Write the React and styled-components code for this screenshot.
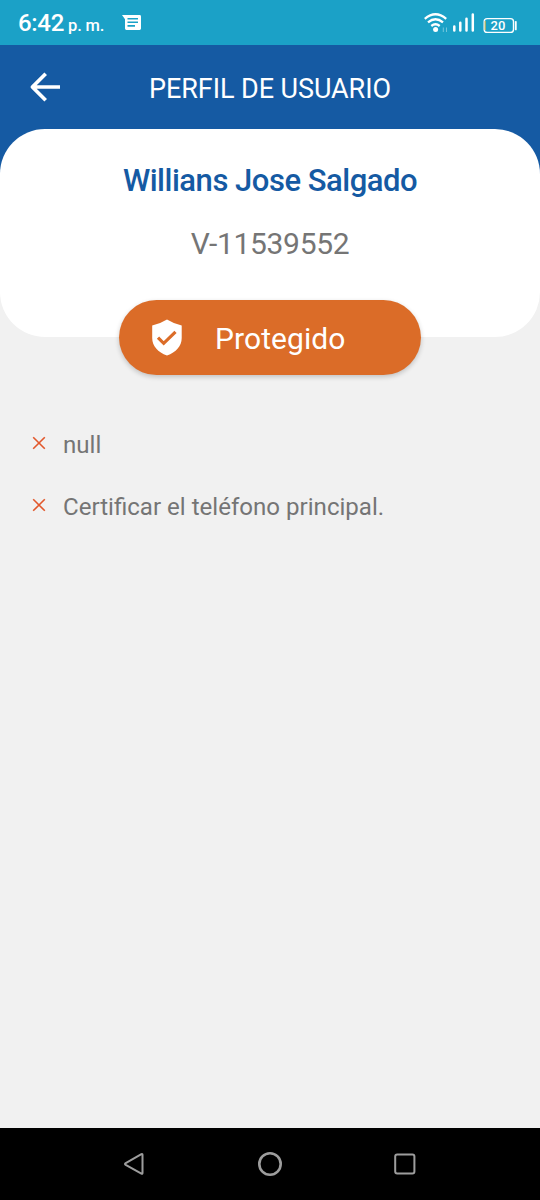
import styled, { createGlobalStyle } from "styled-components";

const GlobalStyle = createGlobalStyle`
  * {
    box-sizing: border-box;
  }
  body {
    margin: 0;
    font-family: Roboto, sans-serif;
    background-color: #f1f1f1;
  }
  svg {
    display: block;
    flex-shrink: 0;
  }
`;

const Screen = styled.div`
  width: 540px;
  height: 1200px;
  display: flex;
  flex-direction: column;
  overflow: hidden;
  white-space: nowrap;
  background-color: #f1f1f1;
`;

const StatusBar = styled.div`
  height: 45px;
  flex-shrink: 0;
  display: flex;
  justify-content: space-between;
  padding: 0 22px 0 18px;
  color: white;
  background-color: #1ba1c7;
`;

const StatusLeft = styled.div`
  display: flex;
  align-items: flex-start;
`;

const Clock = styled.div`
  width: 104px;
  line-height: 47px;
  font-size: 24px;
  font-weight: 500;
  letter-spacing: -0.3px;
`;

const Period = styled.span`
  margin-left: 4px;
  font-size: 16.5px;
  letter-spacing: -0.15px;
`;

const MessageIcon = styled.svg`
  margin-top: 14px;
`;

const StatusIcons = styled.svg`
  margin-top: 10px;
`;

const Header = styled.div`
  flex-shrink: 0;
  background: linear-gradient(#155aa3 0 130px, #f1f1f1 130px);
`;

const AppBar = styled.div`
  height: 84px;
  display: grid;
  grid-template-columns: 60px 1fr 60px;
  align-items: center;
`;

const BackButton = styled.button`
  padding: 0 0 0 29px;
  border: none;
  background: none;
  cursor: pointer;
`;

const Title = styled.h1`
  margin: 3px 0 0;
  text-align: center;
  font-size: 27px;
  line-height: 32px;
  font-weight: 400;
  letter-spacing: -0.08px;
  color: white;
`;

const Card = styled.div`
  height: 208px;
  display: flex;
  flex-direction: column;
  align-items: center;
  padding-top: 34px;
  border-radius: 45px;
  background-color: white;
`;

const Name = styled.div`
  line-height: 36px;
  font-size: 31px;
  font-weight: 500;
  letter-spacing: -0.48px;
  color: #155aa3;
`;

const Document = styled.div`
  margin-top: 27px;
  line-height: 36px;
  font-size: 30px;
  letter-spacing: -0.3px;
  color: #757575;
`;

const StatusButton = styled.button`
  width: 302px;
  height: 75px;
  flex-shrink: 0;
  align-self: center;
  display: flex;
  align-items: center;
  gap: 32px;
  margin-top: -37px;
  padding: 0 0 0 33px;
  border: none;
  border-radius: 38px;
  font-family: inherit;
  font-size: 30px;
  letter-spacing: 0.08px;
  color: white;
  background-color: #db6c28;
  box-shadow: 0 2px 5px rgba(0, 0, 0, 0.2);
  cursor: pointer;
`;

const ButtonText = styled.span`
  padding-top: 1px;
`;

const List = styled.ul`
  flex: 1;
  margin: 0;
  padding: 37px 32px 0;
  list-style: none;
`;

const Item = styled.li`
  height: 62px;
  display: flex;
  align-items: center;
  gap: 17px;
  font-size: 24.08px;
  color: #757575;
`;

const ItemText = styled.span`
  padding-top: 3px;
`;

const NavBar = styled.div`
  height: 72px;
  flex-shrink: 0;
  display: flex;
  align-items: center;
  justify-content: space-between;
  padding: 0 123px 0 122px;
  background-color: black;
`;

const requirements = ["null", "Certificar el teléfono principal."];

function Cross() {
  return (
    <svg width="14" height="14" viewBox="0 0 14 14">
      <path d="M1.2 1.2 12.8 12.8M12.8 1.2 1.2 12.8" stroke="#e2582c" strokeWidth="1.6" />
    </svg>
  );
}

export default function App() {
  return (
    <Screen>
      <GlobalStyle />
      <StatusBar>
        <StatusLeft>
          <Clock>
            6:42<Period>p. m.</Period>
          </Clock>
          <MessageIcon width="21" height="17" viewBox="0 0 21 17">
            <path
              d="M0 1H17.6Q19 1 19 2.4V14.6Q19 16 17.6 16H4.4Q3 16 3 14.6V5.3Z"
              fill="white"
            />
            <path d="M5.5 4.7H16M5.5 8.3H16M5.5 11.9H13" stroke="#1ba1c7" strokeWidth="1.6" />
          </MessageIcon>
        </StatusLeft>
        <StatusIcons width="95" height="26" viewBox="423 10 95 26">
          <g fill="none" stroke="white" strokeWidth="2.3">
            <path d="M424.8 18.8Q435.5 9.8 446.2 18.8" />
            <path d="M428 22.4Q435.5 16.2 443 22.4" />
            <path d="M431.3 26Q435.5 22.6 439.7 26" />
          </g>
          <circle cx="435.6" cy="29.4" r="2.5" fill="white" />
          <path d="M443.3 27.5V32M446.5 27.5V32" stroke="#73c6dd" strokeWidth="1" />
          <path
            d="M454.3 26.5V30.5M460.3 22.8V30.5M466.5 18.8V30.5M472.8 14.5V30.5"
            stroke="white"
            strokeWidth="2.5"
            strokeLinecap="round"
          />
          <rect x="484.2" y="18.6" width="29.3" height="13.8" rx="3" fill="none" stroke="white" strokeWidth="1.4" />
          <path d="M485.2 21V30" stroke="#c5b65c" strokeWidth="1.2" />
          <path d="M515.8 21.8V29.4" stroke="white" strokeWidth="1.8" strokeLinecap="round" />
          <text x="498" y="30.3" fill="white" fontSize="13" fontWeight="500" textAnchor="middle">
            20
          </text>
        </StatusIcons>
      </StatusBar>
      <Header>
        <AppBar>
          <BackButton aria-label="Volver">
            <svg width="32" height="30" viewBox="0 0 32 30">
              <path
                d="M31 15H4M16.7 1.8 3.4 15 16.7 28.2"
                fill="none"
                stroke="white"
                strokeWidth="3.7"
                strokeLinejoin="round"
              />
            </svg>
          </BackButton>
          <Title>PERFIL DE USUARIO</Title>
        </AppBar>
        <Card>
          <Name>Willians Jose Salgado</Name>
          <Document>V-11539552</Document>
        </Card>
      </Header>
      <StatusButton>
        <svg width="31" height="37" viewBox="0 0 31 37">
          <path
            d="M15 0.5Q21.5 4.6 29.7 6.5V19C29.7 27 24 33.5 15 36.4C6 33.5 0.2 27 0.2 19V6.5Q8.5 4.6 15 0.5Z"
            fill="white"
          />
          <path d="M6 18.6 11.7 24.3 23.5 12.8" fill="none" stroke="#db6c28" strokeWidth="3.2" />
        </svg>
        <ButtonText>Protegido</ButtonText>
      </StatusButton>
      <List>
        {requirements.map((text) => (
          <Item key={text}>
            <Cross />
            <ItemText>{text}</ItemText>
          </Item>
        ))}
      </List>
      <NavBar>
        <svg width="24" height="24" viewBox="0 0 24 24">
          <path
            d="M20.5 2.8V21Q20.5 22.2 19.4 21.6L3.7 12.9Q2.3 12 3.7 11.1L19.4 2.2Q20.5 1.6 20.5 2.8Z"
            fill="none"
            stroke="#9d9d9d"
            strokeWidth="2"
            strokeLinejoin="round"
          />
        </svg>
        <svg width="24" height="24" viewBox="0 0 24 24">
          <circle cx="12" cy="12" r="10.7" fill="none" stroke="#9d9d9d" strokeWidth="2.6" />
        </svg>
        <svg width="24" height="24" viewBox="0 0 24 24">
          <rect x="2.2" y="2.4" width="19.2" height="19.2" rx="2" fill="none" stroke="#9d9d9d" strokeWidth="2" />
        </svg>
      </NavBar>
    </Screen>
  );
}
